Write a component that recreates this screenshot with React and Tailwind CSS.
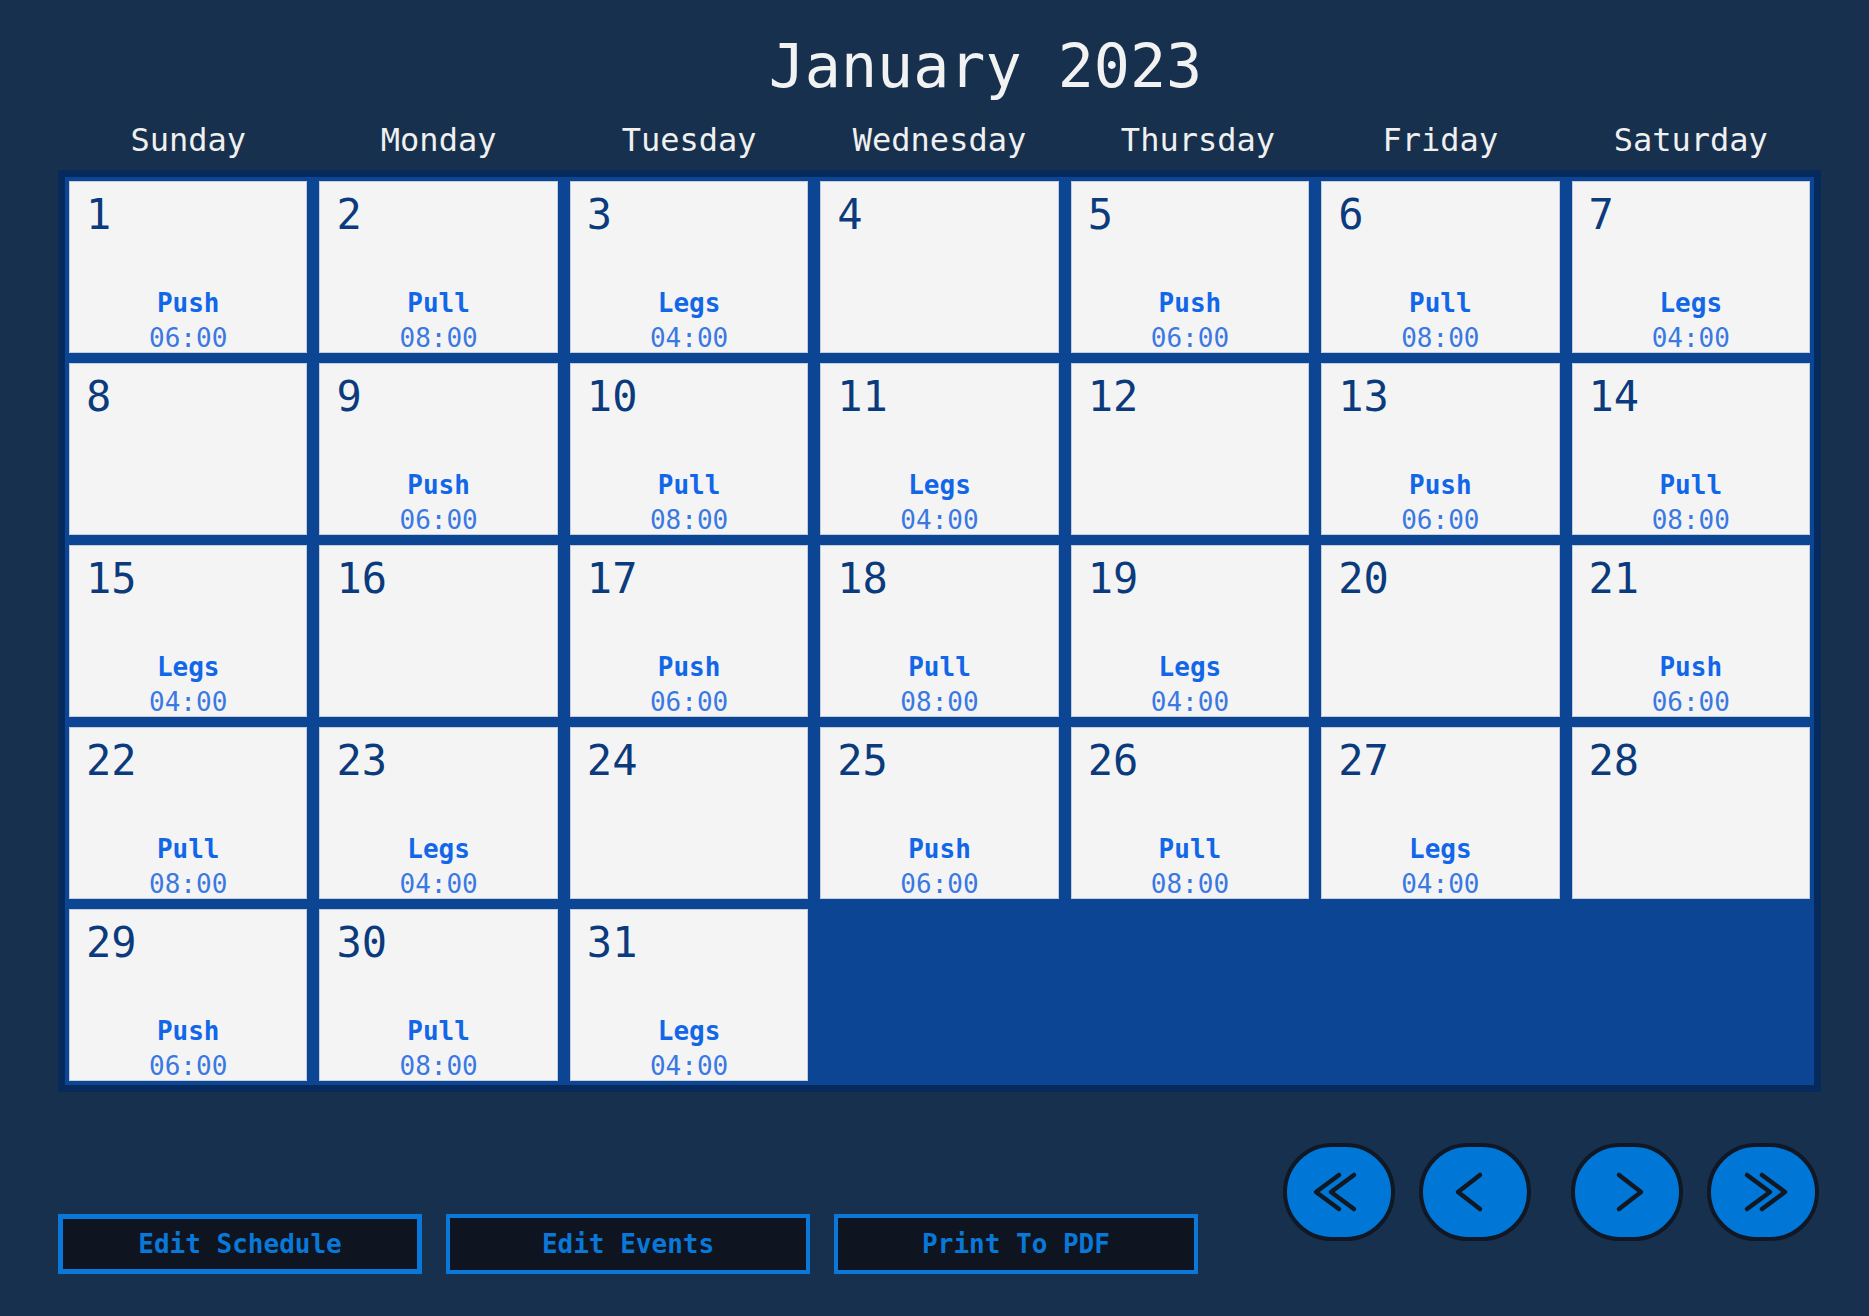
import React from "react"

const workouts = [
  { name: "Push", time: "06:00" },
  { name: "Pull", time: "08:00" },
  { name: "Legs", time: "04:00" },
  null,
]

const days = ["Sunday", "Monday", "Tuesday", "Wednesday", "Thursday", "Friday", "Saturday"]

function DayCell({ day }) {
  const event = workouts[(day - 1) % 4]
  return (
    <div className="h-[172px] bg-[#f4f4f4] border border-[#c4cddb] flex flex-col">
      <div className="pl-[16px] pt-[12px] text-[42px] leading-[42px] text-[#0b3b7c]">{day}</div>
      {event && (
        <div className="mt-auto pb-[1px] flex flex-col items-center">
          <div className="text-[26px] leading-[44px] font-bold text-[#1266e8]">{event.name}</div>
          <div className="text-[26px] leading-[26px] text-[#3a78e2]">{event.time}</div>
        </div>
      )}
    </div>
  )
}

function NavCircle({ children, className }) {
  return (
    <button className={"w-[112px] h-[98px] rounded-full bg-[#0077d6] border-[4px] border-[#0f1824] flex items-center justify-center " + className}>
      <svg width="104" height="90" viewBox="0 0 104 90" fill="none" stroke="#101823" strokeWidth="4.5" strokeLinecap="round" strokeLinejoin="round">
        {children}
      </svg>
    </button>
  )
}

export default function App() {
  const cells = []
  for (let d = 1; d <= 31; d++) cells.push(d)

  return (
    <div className="min-h-screen w-full bg-[#16304e] font-['DejaVu_Sans_Mono',monospace]">
      <div className="w-[1763px] ml-[58px]">
        {/* Title */}
        <h1 className="pt-[30px] pl-[92px] text-center text-[60px] leading-[72px] text-[#f2f2f2]">January 2023</h1>

        {/* Weekday headers */}
        <div className="mt-[18px] px-[11px] grid grid-cols-7 gap-x-[12px]">
          {days.map((d) => (
            <div key={d} className={"text-center text-[32px] leading-[40px] text-[#f0f0f0] " + (d === "Thursday" ? "pl-[16px]" : "")}>
              {d}
            </div>
          ))}
        </div>

        {/* Month grid */}
        <div className="mt-[10px] border-[7px] border-[#072a5c] bg-[#0b4594] p-[4px] grid grid-cols-7 gap-x-[12px] gap-y-[10px]">
          {cells.map((d) => (
            <DayCell key={d} day={d} />
          ))}
        </div>

        {/* Bottom controls */}
        <div className="mt-[51px] flex justify-between pr-[2px]">
          <div className="mt-[71px] flex gap-[24px]">
            <button className="w-[364px] h-[60px] bg-[#0e1520] border-[5px] border-[#0a78d8] text-[26px] font-bold text-[#0a78d8]">
              Edit Schedule
            </button>
            <button className="w-[364px] h-[60px] bg-[#0e1520] border-[4px] border-[#0a78d8] text-[26px] font-bold text-[#0a78d8]">
              Edit Events
            </button>
            <button className="w-[364px] h-[60px] bg-[#0e1520] border-[4px] border-[#0a78d8] text-[26px] font-bold text-[#0a78d8]">
              Print To PDF
            </button>
          </div>

          <div className="flex">
            <NavCircle className="">
              <polyline points="52,28 29,45 52,62" />
              <polyline points="67,28 44,45 67,62" />
            </NavCircle>
            <NavCircle className="ml-[24px]">
              <polyline points="57,28 35,45 57,62" />
            </NavCircle>
            <NavCircle className="ml-[40px]">
              <polyline points="44,28 66,45 44,62" />
            </NavCircle>
            <NavCircle className="ml-[24px]">
              <polyline points="36,28 59,45 36,62" />
              <polyline points="51,28 74,45 51,62" />
            </NavCircle>
          </div>
        </div>
      </div>
    </div>
  )
}
